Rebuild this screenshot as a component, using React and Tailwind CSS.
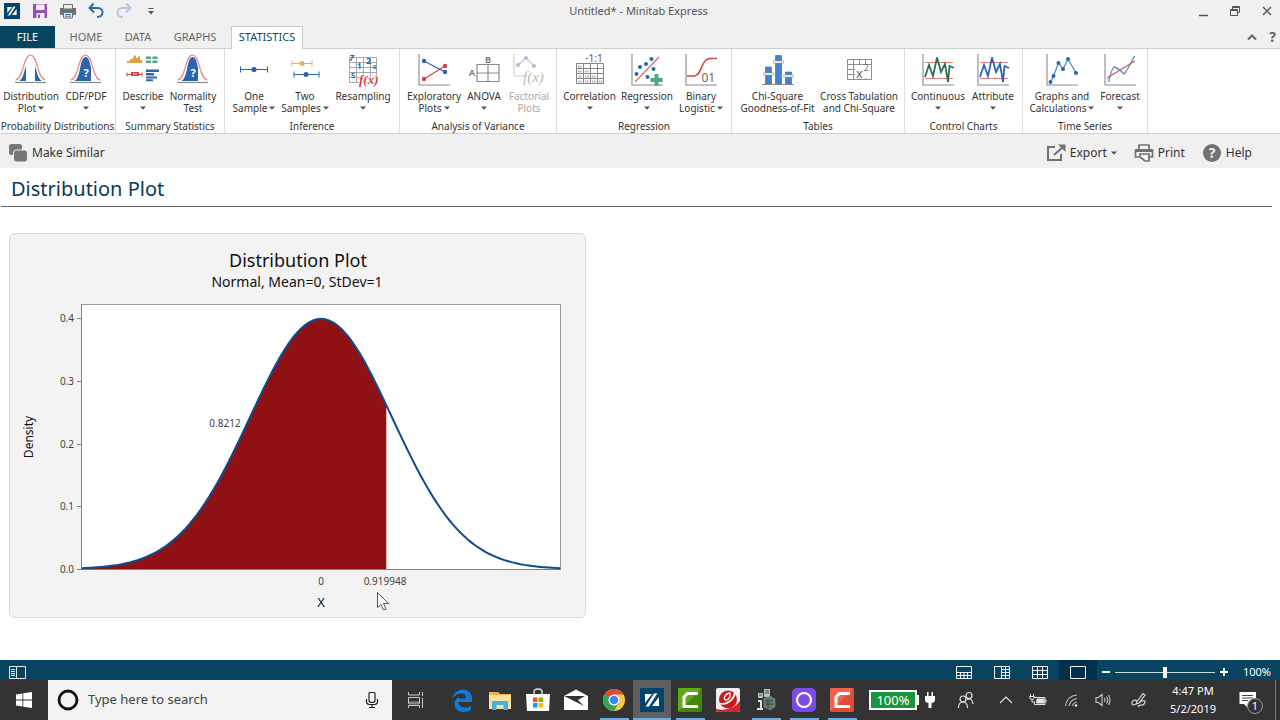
import { useState } from 'react';

const BLUE = '#2a66b0';
const RED = '#d5433d';
const GRAY = '#8a8a8a';

const Caret = ({ className = '' }) => (
  <svg viewBox="0 0 6 4" className={`inline-block h-1 w-1.5 ${className}`} fill="#555">
    <path d="M0 0.5h6L3 3.8z" />
  </svg>
);

const MinitabLogo = ({ className }) => (
  <svg viewBox="0 0 24 24" className={className}>
    <rect width="24" height="24" fill="#00446a" />
    <path d="M5 6h7L5 15zM19 18h-7l7-9z" fill="#fff" />
    <path d="M14 5h4L9 19H5z" fill="#fff" stroke="#00446a" strokeWidth="0.8" />
  </svg>
);

// Ribbon drawings, all on a 32x32 grid
const Axes = () => <path d="M1 0V31H32" fill="none" stroke={GRAY} strokeWidth="1.1" />;

const Bell = () => (
  <>
    <path d="M0.5 26C9 25 8 1 15.5 1S22 25 30.5 26" fill="none" stroke="#e58b88" strokeWidth="1.2" />
    <path d="M0 28.5H31" stroke={GRAY} strokeWidth="1.2" />
  </>
);

const BellFilled = () => (
  <>
    <path d="M4 27C11 25 9.500 3 15.500 3C19 3 20 9 21 14V27Z" fill={BLUE} />
    <Bell />
    <text x="16" y="23" textAnchor="middle" fontSize="11" fontWeight="700" fill="#fff">?</text>
  </>
);

const Control = ({ color }) => (
  <>
    <Axes />
    <path d="M3 8.500H31M3 24.500H31" stroke="#e2827d" strokeWidth="1" />
    <path d="M3 23L7 11L11 22L15 3.500L19 18L23 10L26 28L27.500 12L32 14" fill="none" stroke={color} strokeWidth="1.8" />
  </>
);

const icons = {
  distribution: (
    <>
      <path d="M4 27C8 25 9 18 11 12V27ZM27 27C23 25 22 18 20 12V27Z" fill={BLUE} />
      <Bell />
    </>
  ),
  cdf: <BellFilled />,
  describe: (
    <>
      <path d="M0 9V7h3V5h3V3h1V1.500h2V4h2V2.500h2V6h2v3z" fill="#dfa13c" />
      <path d="M19 2.500h5v2.500h-5zM25.500 2.500h5v2.500h-5zM19 6.500h5V9h-5zM25.500 6.500h5V9h-5z" fill="#52a582" />
      <path d="M0 20.500H15M0 18.500v4M15 18.500v4" stroke={RED} strokeWidth="1" />
      <path d="M4 18h8v4H4z" fill={RED} />
      <path d="M6 20h4" stroke="#fff" strokeWidth="0.800" />
      <path d="M19 15.500h13v2.500H19zM19 19h8v2.500h-8zM19 22.500h11v2H19zM19 25.300h7v2h-7z" fill={BLUE} />
    </>
  ),
  normality: <BellFilled />,
  one: (
    <>
      <path d="M2.500 15.500H29.500M2.500 12.500v6M29.500 12.500v6" stroke={BLUE} strokeWidth="1" />
      <circle cx="16" cy="15.500" r="2.600" fill={BLUE} />
    </>
  ),
  two: (
    <>
      <path d="M3 9.500H23M3 6.500v6M23 6.500v6" stroke="#e9b258" />
      <circle cx="13" cy="9.500" r="2.500" fill="#e9b258" />
      <path d="M5 20.500H30M5 17.500v6M30 17.500v6" stroke={BLUE} />
      <circle cx="17" cy="20.500" r="2.500" fill={BLUE} />
    </>
  ),
  resampling: (
    <>
      <path d="M2.500 3.500h27v25h-27zM2.500 8.500h27M2.500 13.500h27M2.500 18.500h27M2.500 23.500h27M9.500 3v25M16.500 3v25M23.500 3v25" fill="none" stroke="#a5a5a5" />
      <g fill={BLUE} fontWeight="700">
        <text x="2" y="7" fontSize="9" fontStyle="italic">7</text>
        <text x="19" y="10" fontSize="9">2</text>
        <text x="10" y="15" fontSize="8">1</text>
        <text x="4" y="24" fontSize="7">5</text>
        <text x="26" y="15" fontSize="6">0</text>
      </g>
      <text x="12" y="30" fontSize="13" fontStyle="italic" fontWeight="700" fill={RED} stroke="#fff" strokeWidth="1.500" paintOrder="stroke" fontFamily="Liberation Serif, serif">f(x)</text>
    </>
  ),
  exploratory: (
    <>
      <Axes />
      <path d="M6 25L27 12" stroke={RED} strokeWidth="1.200" />
      <path d="M6 7L27 18" stroke={BLUE} strokeWidth="1.200" />
      <g fill={BLUE}><circle cx="6" cy="7" r="2.200" /><circle cx="27" cy="18" r="2.200" /></g>
      <g fill={RED}><circle cx="6" cy="25" r="2.200" /><circle cx="27" cy="12" r="2.200" /></g>
    </>
  ),
  anova: (
    <>
      <path d="M9 10.500h22v17H9zM9 19h22M20 10.500v17" fill="none" stroke={GRAY} strokeWidth="1.200" />
      <g fill="#6b6b6b" fontSize="9" fontWeight="600">
        <text x="1" y="22">A</text>
        <text x="17" y="9">B</text>
      </g>
    </>
  ),
  factorial: (
    <>
      <path d="M1 0V22H12" fill="none" stroke="#c9c9c9" />
      <path d="M5 11L13 4L21 12" fill="none" stroke="#b4c6de" strokeWidth="1.200" />
      <g fill="#aec0da"><circle cx="5" cy="11" r="2" /><circle cx="13" cy="4" r="2" /><circle cx="21" cy="12" r="2" /></g>
      <text x="10" y="28" fontSize="15" fontStyle="italic" fill="#b8b8b8" fontFamily="Liberation Serif, serif">f(x)</text>
    </>
  ),
  correlation: (
    <>
      <path d="M2.500 9.500h27v20h-27zM2.500 14.500h27M2.500 19.500h27M2.500 24.500h27M9.500 9.500v20M16.500 9.500v20M23.500 9.500v20" fill="none" stroke="#858585" />
      <path d="M4 12.500h4M4 17.500h4M11 17.500h4M4 22.500h4M11 22.500h4M18 22.500h4M4 27.500h4M11 27.500h4M18 27.500h4M25 27.500h4" stroke="#b3b3b3" strokeWidth="2" strokeDasharray="1.500 0.500" />
      <text x="20" y="7.500" textAnchor="middle" fontSize="10" fontWeight="500" fill="#777">-1:1</text>
    </>
  ),
  regression: (
    <>
      <Axes />
      <path d="M4 28L28 3" stroke="#dd6e69" strokeWidth="1.300" />
      <g fill={BLUE}>
        <circle cx="5.500" cy="20" r="2" /><circle cx="9" cy="13" r="2" /><circle cx="15" cy="10" r="2" />
        <circle cx="20.500" cy="5" r="2" /><circle cx="22.500" cy="15" r="2" /><circle cx="16.500" cy="23" r="2" />
      </g>
      <path d="M23.500 20h4v4h4v4h-4v4h-4v-4h-4v-4h4z" fill="#55a583" />
    </>
  ),
  logistic: (
    <>
      <Axes />
      <path d="M2 22H9C17 22 16 4.500 25 4.500H32" fill="none" stroke={RED} strokeWidth="1.500" />
      <text x="16.500" y="28" fontSize="12" fill="#666">01</text>
    </>
  ),
  chisquare: (
    <>
      <path d="M3.500 13h6v17h-6zM13.500 1.500h6V30h-6zM23.500 18h6v12h-6z" fill="#4583cb" stroke={BLUE} strokeWidth="0.600" />
      <path d="M0 30.500H32" stroke={GRAY} />
      <path d="M1.500 20h10M11.500 8h10M21.500 22h10" stroke="#8a8f96" strokeWidth="3" />
      <path d="M2 20h9M12 8h9M22 22h9" stroke="#fff" strokeWidth="1.500" />
    </>
  ),
  crosstab: (
    <>
      <path d="M4.500 5.500h24v20h-24zM4.500 10.500h24M4.500 15.500h24M4.500 20.500h24M10.500 5.500v20M16.500 5.500v20M22.500 5.500v20" fill="none" stroke="#8e8e8e" />
      <path d="M12 11h16v13H12z" fill="#fff" />
      <text x="13" y="24" fontSize="13" fill="#666">x</text>
      <text x="21" y="17" fontSize="8" fill="#666">2</text>
      <path d="M28.500 5v21" stroke="#8e8e8e" />
    </>
  ),
  continuous: <Control color="#2b7052" />,
  attribute: <Control color="#2c66b4" />,
  graphs: (
    <>
      <Axes />
      <path d="M4.500 28L7.500 22L12.500 9L17 15L22 5L30 19" fill="none" stroke="#4a83c4" strokeWidth="1.200" />
      <g fill={BLUE}>
        <circle cx="4.500" cy="28" r="2" /><circle cx="7.500" cy="22" r="2" /><circle cx="12.500" cy="9" r="2" />
        <circle cx="17" cy="15" r="2" /><circle cx="22" cy="5" r="2" /><circle cx="30" cy="19" r="2" />
      </g>
    </>
  ),
  forecast: (
    <>
      <Axes />
      <path d="M4.500 28Q8 14 10 13Q13 13 20 20Q23 17 30.500 2" fill="none" stroke="#5a89c4" strokeWidth="1.300" />
      <path d="M3 24L31 7" stroke="#d75c57" strokeWidth="1.400" />
    </>
  ),
};

// caret: 'inline' sits after the second line, 'below' takes that line
const groups = [
  { name: 'Probability Distributions', width: 'w-[116px]', items: [
    { icon: 'distribution', lines: ['Distribution', 'Plot'], caret: 'inline', width: 'w-[54px]' },
    { icon: 'cdf', lines: ['CDF/PDF'], caret: 'below', width: 'w-[56px]' },
  ] },
  { name: 'Summary Statistics', width: 'w-[109px]', items: [
    { icon: 'describe', lines: ['Describe'], caret: 'below', width: 'w-[46px]' },
    { icon: 'normality', lines: ['Normality', 'Test'], width: 'w-[54px]' },
  ] },
  { name: 'Inference', width: 'w-[175px]', items: [
    { icon: 'one', lines: ['One', 'Sample'], caret: 'inline', width: 'w-[50px]' },
    { icon: 'two', lines: ['Two', 'Samples'], caret: 'inline', width: 'w-[52px]' },
    { icon: 'resampling', lines: ['Resampling'], caret: 'below', width: 'w-[64px]' },
  ] },
  { name: 'Analysis of Variance', width: 'w-[157px]', items: [
    { icon: 'exploratory', lines: ['Exploratory', 'Plots'], caret: 'inline', width: 'w-[60px]' },
    { icon: 'anova', lines: ['ANOVA'], caret: 'below', width: 'w-[40px]' },
    { icon: 'factorial', lines: ['Factorial', 'Plots'], disabled: true, width: 'w-[50px]' },
  ] },
  { name: 'Regression', width: 'w-[175px]', items: [
    { icon: 'correlation', lines: ['Correlation'], caret: 'below', width: 'w-[57px]' },
    { icon: 'regression', lines: ['Regression'], caret: 'below', width: 'w-[58px]' },
    { icon: 'logistic', lines: ['Binary', 'Logistic'], caret: 'inline', width: 'w-[50px]' },
  ] },
  { name: 'Tables', width: 'w-[173px]', items: [
    { icon: 'chisquare', lines: ['Chi-Square', 'Goodness-of-Fit'], width: 'w-[83px]' },
    { icon: 'crosstab', lines: ['Cross Tabulation', 'and Chi-Square'], width: 'w-[80px]' },
  ] },
  { name: 'Control Charts', width: 'w-[118px]', items: [
    { icon: 'continuous', lines: ['Continuous'], caret: 'below', width: 'w-[58px]' },
    { icon: 'attribute', lines: ['Attribute'], caret: 'below', width: 'w-[52px]' },
  ] },
  { name: 'Time Series', width: 'w-[125px]', items: [
    { icon: 'graphs', lines: ['Graphs and', 'Calculations'], caret: 'inline', width: 'w-[70px]' },
    { icon: 'forecast', lines: ['Forecast'], caret: 'below', width: 'w-[46px]' },
  ] },
];

const RibbonButton = ({ item }) => (
  <button
    disabled={item.disabled}
    className={`flex shrink-0 flex-col items-center whitespace-nowrap text-[10px] leading-3 ${item.width} ${item.disabled ? 'text-[#a9a9a9]' : 'text-[#333]'}`}
  >
    <svg viewBox="0 0 32 32" className="mb-1 h-8 w-8 shrink-0 overflow-visible">{icons[item.icon]}</svg>
    <span>{item.lines[0]}</span>
    <span className="flex h-3 items-center gap-0.5">
      {item.lines[1]}
      {item.caret && <Caret />}
    </span>
  </button>
);

const TitleBar = () => (
  <header className="flex h-[22px] shrink-0 items-center">
    <div className="flex flex-1 items-center gap-3 pl-1">
      <MinitabLogo className="h-4 w-4" />
      <button aria-label="Save">
        <svg viewBox="0 0 16 16" className="h-4 w-4">
          <path d="M1 1h14v14H1z" fill="#9450b5" />
          <path d="M4 1.500h8.500v5.500H4zM4.500 10h8v5h-8z" fill="#f4eef7" />
          <path d="M6 11.500h2V15H6z" fill="#9450b5" />
        </svg>
      </button>
      <button aria-label="Print">
        <svg viewBox="0 0 16 16" className="h-4 w-4">
          <path d="M0 5h16v7H0z" fill="#707070" />
          <path d="M3.500 1.500h9V6h-9zM3.500 9.500h9V15h-9z" fill="#eee" stroke="#707070" />
          <path d="M5 11.500h6M5 13.200h6" stroke="#3d7ab8" />
        </svg>
      </button>
      <button aria-label="Undo">
        <svg viewBox="0 0 16 16" className="h-4 w-4" fill="none" stroke="#2868b0" strokeWidth="1.900">
          <path d="M5.500 0.500L1.500 5l4.500 4.500M2 5h8c6 0 6.500 9-1 9" />
        </svg>
      </button>
      <button aria-label="Redo" disabled>
        <svg viewBox="0 0 16 16" className="h-4 w-4" fill="none" stroke="#b0c6de" strokeWidth="1.900">
          <path d="M10.500 0.500l4 4.500L10 9.500M14 5H6c-6 0-6.500 9 1 9" />
        </svg>
      </button>
      <button aria-label="Customize toolbar" className="ml-1">
        <svg viewBox="0 0 6 8" className="h-2 w-1.5" fill="#555"><path d="M0.500 1h5v1h-5zM0 4h6L3 7.500z" /></svg>
      </button>
    </div>
    <h1 className="text-[11px] text-[#555]">Untitled* - Minitab Express</h1>
    <div className="flex flex-1 justify-end gap-5 pr-[7px] text-[#555]">
      <button aria-label="Minimize">
        <svg viewBox="0 0 12 12" className="h-3 w-3" stroke="currentColor" strokeWidth="1.500"><path d="M2 10.500h9" /></svg>
      </button>
      <button aria-label="Restore">
        <svg viewBox="0 0 12 12" className="h-3 w-3" fill="none" stroke="currentColor"><path d="M1.500 4.500h7v6h-7zM1.500 5.500h7M3.500 4V1.500h7v6H9M3.500 2.500h7" /></svg>
      </button>
      <button aria-label="Close">
        <svg viewBox="0 0 12 12" className="h-3 w-3" stroke="currentColor" strokeWidth="1.400"><path d="M2 2l8 8M10 2l-8 8" /></svg>
      </button>
    </div>
  </header>
);

const TabBar = () => (
  <nav className="flex h-[26px] shrink-0 items-end text-[11px] text-[#666]">
    <button className="h-[22px] w-[55px] bg-[#064560] text-white">FILE</button>
    <button className="h-[22px] w-[62px]">HOME</button>
    <button className="h-[22px] w-[42px]">DATA</button>
    <button className="h-[22px] w-[72px]">GRAPHS</button>
    <button className="z-10 -mb-px h-[23px] w-[72px] border border-b-0 border-[#ccc] bg-white pb-px text-[#0b4a66]">STATISTICS</button>
    <div className="ml-auto flex h-[22px] items-center gap-3 pr-1">
      <button aria-label="Collapse ribbon">
        <svg viewBox="0 0 10 8" className="h-2 w-2.5" fill="none" stroke="#666" strokeWidth="2"><path d="M1 6.500L5 2.500L9 6.500" /></svg>
      </button>
      <button className="text-sm font-bold">?</button>
    </div>
  </nav>
);

const Ribbon = () => (
  <section className="flex h-[86px] shrink-0 border-y border-[#cfcfcf] bg-white">
    {groups.map(g => (
      <div key={g.name} className={`flex shrink-0 flex-col border-r border-[#ddd] pt-[5px] ${g.width}`}>
        <div className="flex pl-1">
          {g.items.map(item => <RibbonButton key={item.icon} item={item} />)}
        </div>
        <p className="mt-1 self-center text-[10px] leading-4 whitespace-nowrap text-[#333]">{g.name}</p>
      </div>
    ))}
  </section>
);

const Toolbar = () => (
  <section className="flex h-[34px] shrink-0 items-center pt-[3px] pr-7 pl-2 text-xs text-[#333]">
    <button className="flex items-center gap-1">
      <svg viewBox="0 0 20 20" className="h-5 w-5">
        <rect x="1" y="1" width="13" height="11" rx="2.500" fill="#777" />
        <rect x="5.500" y="7" width="14" height="12" rx="3" fill="#777" stroke="#f0f0f0" />
      </svg>
      Make Similar
    </button>
    <div className="ml-auto flex items-center gap-[17px]">
      <button className="flex items-center gap-1">
        <svg viewBox="0 0 20 20" className="h-5 w-5" fill="none" stroke="#717171" strokeWidth="2">
          <path d="M9 4H2v13h13v-6M8 12L18 3" />
          <path d="M12 1.500h7.500v7.500z" fill="#717171" stroke="none" />
        </svg>
        Export
        <Caret />
      </button>
      <button className="flex items-center gap-1">
        <svg viewBox="0 0 20 20" className="h-5 w-5" fill="none" stroke="#717171" strokeWidth="1.700">
          <path d="M5 7V2h10v5M5 14H1.500V7h17v7H15M6 11h9v7h-4l-5-4z" />
          <path d="M2 7.500h16" strokeWidth="3" />
        </svg>
        Print
      </button>
      <button className="flex items-center gap-1">
        <svg viewBox="0 0 20 20" className="h-5 w-5">
          <circle cx="10" cy="10" r="9" fill="#717171" />
          <text x="10" y="15" textAnchor="middle" fontSize="14" fontWeight="700" fill="#f0f0f0">?</text>
        </svg>
        Help
      </button>
    </div>
  </section>
);

// Plot area and scale of the density graph
const ORIGIN_X = 312;
const BASE_Y = 336;
const UNIT_X = 71;
const UNIT_Y = 627;
const RANGE = 3.37;
const CUTOFF = 0.919948;

const curve = (from, to) => {
  const points = [];
  for (let i = 0; i <= 120; i++) {
    const z = from + ((to - from) * i) / 120;
    const density = Math.exp((-z * z) / 2) / Math.sqrt(2 * Math.PI);
    points.push(`${ORIGIN_X + z * UNIT_X},${BASE_Y - density * UNIT_Y}`);
  }
  return points.join(' ');
};

const DensityPlot = () => {
  const cutX = ORIGIN_X + CUTOFF * UNIT_X;
  return (
    <svg viewBox="1 1 575 383" className="block h-[383px] w-[575px]" role="img" aria-label="Distribution plot">
      <g textAnchor="middle" fill="#111">
        <text x="289" y="34" fontSize="18">Distribution Plot</text>
        <text x="288" y="54" fontSize="14">Normal, Mean=0, StDev=1</text>
        <text x="312" y="374" fontSize="13">X</text>
        <text x="24" y="204" fontSize="12" transform="rotate(-90 24 204)">Density</text>
      </g>
      <rect x="72.500" y="71.500" width="479" height="265" fill="#fff" stroke="#999" />
      <polygon points={`73,${BASE_Y} ${curve(-RANGE, CUTOFF)} ${cutX},${BASE_Y}`} fill="#8f1113" />
      <path d="M72.500 71V336.500H552" fill="none" stroke="#808080" />
      {[0, 1, 2, 3, 4].map(n => {
        const y = Math.round(BASE_Y - n * 0.1 * UNIT_Y);
        return (
          <g key={n}>
            <path d={`M68 ${y + 0.5}H72`} stroke="#808080" />
            <text x="65" y={y + 4} textAnchor="end" fontSize="10" fill="#444">{(n / 10).toFixed(1)}</text>
          </g>
        );
      })}
      <polyline points={curve(-RANGE, RANGE)} fill="none" stroke="#0b4c93" strokeWidth="2" />
      <g fontSize="10" textAnchor="middle" fill="#444">
        <text x="216" y="194">0.8212</text>
        <text x="312" y="352">0</text>
        <text x="376" y="352">{CUTOFF}</text>
      </g>
    </svg>
  );
};

const views = [
  { name: 'Split view', path: 'M0.500 1.500h15v12h-15zM0.500 7.500h15M0.500 10.500h15M4.500 7.500v6M8 7.500v6M11.500 7.500v6' },
  { name: 'Side view', path: 'M0.500 1.500h15v12h-15zM7.500 1.500v12M11.500 1.500v12M7.500 4.500h8M7.500 7.500h8M7.500 10.500h8' },
  { name: 'Grid view', path: 'M0.500 1.500h15v12h-15zM0.500 5.500h15M0.500 9.500h15M5.500 1.500v12M10.500 1.500v12' },
  { name: 'Single view', path: 'M0.500 1.500h15v12h-15z', active: true },
];

const StatusBar = () => {
  const [zoom, setZoom] = useState(100);
  return (
    <section className="flex h-5 shrink-0 items-stretch bg-[#084460] text-[11px] text-white">
      <button aria-label="Toggle navigator" className="flex items-end pl-[9px]">
        <svg viewBox="0 0 17 14" className="h-3.5 w-[17px]" fill="none" stroke="#e2edf2">
          <path d="M0.500 0.500h16v12h-16zM7.500 0.500v12" />
          <path d="M2 3.500h4M2 5.500h4M2 7.500h4M2 9.500h4" strokeWidth="1.200" />
        </svg>
      </button>
      <div className="ml-auto flex">
        {views.map(v => (
          <button key={v.name} aria-label={v.name} className={`flex w-[38px] items-end justify-center ${v.active ? 'bg-[#03304a]' : ''}`}>
            <svg viewBox="0 0 16 15" className="h-[15px] w-4" fill="none" stroke="#eef4f7">
              <path d={v.path} />
            </svg>
          </button>
        ))}
      </div>
      <div className="flex items-center gap-1 pt-1 pr-[9px] pl-1">
        <button aria-label="Zoom out" onClick={() => setZoom(Math.max(0, zoom - 10))}>
          <svg viewBox="0 0 10 10" className="h-2.5 w-2.5" stroke="#fff" strokeWidth="2"><path d="M1 5h8" /></svg>
        </button>
        <input
          type="range"
          aria-label="Zoom"
          min="0"
          max="200"
          value={zoom}
          onChange={e => setZoom(Number(e.target.value))}
          className="h-3 w-[100px] appearance-none bg-transparent [&::-webkit-slider-runnable-track]:h-px [&::-webkit-slider-runnable-track]:bg-[#c9dbe4] [&::-webkit-slider-thumb]:-mt-[5px] [&::-webkit-slider-thumb]:h-[11px] [&::-webkit-slider-thumb]:w-1 [&::-webkit-slider-thumb]:appearance-none [&::-webkit-slider-thumb]:bg-white"
        />
        <button aria-label="Zoom in" onClick={() => setZoom(Math.min(200, zoom + 10))}>
          <svg viewBox="0 0 10 10" className="h-2.5 w-2.5" stroke="#fff" strokeWidth="2"><path d="M1 5h8M5 1v8" /></svg>
        </button>
        <span className="w-[38px] text-right leading-3">{zoom}%</span>
      </div>
    </section>
  );
};

const Camtasia = ({ color, light }) => (
  <>
    <rect width="24" height="24" rx="2" fill={color} />
    <path d="M0 0h24L0 24z" fill={light} opacity="0.500" />
    <path d="M20 5.500H9.500L6 9V18.500H20" fill="none" stroke="#fff" strokeWidth="3" />
  </>
);

const apps = [
  { name: 'Edge', art: (
    <path d="M2 12C3 5 8 1.500 13 1.500C19 1.500 22 6 22 11V14H8.500C8.500 18 12 19.500 15 19.500C17.500 19.500 19.500 19 21 18V22C19 23.300 16.500 24 13.500 24C8 24 4.500 20.500 4.500 16C4.500 12 7 9.500 9.500 8.500C8.800 9.300 8.500 10 8.500 10.500H16C16 7 14 5.500 11.500 5.500C7 5.500 4 8 2 12Z" fill="#1478d4" />
  ) },
  { name: 'File Explorer', art: (
    <>
      <path d="M1 4h9l2 2h11v15H1z" fill="#e6b84e" />
      <path d="M1 7h22v14H1z" fill="#fce29a" />
      <path d="M4 13h16v9h-4.500v-5h-7v5H4z" fill="#41b1e4" />
    </>
  ) },
  { name: 'Store', art: (
    <>
      <path d="M8 7V4c0-4 8-4 8 0v3" fill="none" stroke="#ddd" strokeWidth="1.500" />
      <path d="M0 6h24l-1 17H1z" fill="#fff" />
      <path d="M7 9.500h4.500V14H7z" fill="#f25022" /><path d="M12.500 9.500H17V14h-4.500z" fill="#7fba00" />
      <path d="M7 15h4.500v4.500H7z" fill="#00a4ef" /><path d="M12.500 15H17v4.500h-4.500z" fill="#ffb900" />
    </>
  ) },
  { name: 'Mail', art: (
    <>
      <path d="M12 1.500L24 8v14H0V8z" fill="#fff" />
      <path d="M0 8h21l-7 4 6 6-9-4.500z" fill="#333" />
    </>
  ) },
  { name: 'Chrome', running: true, art: (
    <>
      <circle cx="12" cy="12" r="11" fill="#f6c945" />
      <path d="M12 12L2.500 6.500A11 11 0 0 1 21.500 6.500H12z" fill="#dc4a3d" />
      <path d="M12 12L2.500 6.500A11 11 0 0 0 12 23L17 14.500z" fill="#35a257" />
      <circle cx="12" cy="12" r="5.500" fill="#fff" />
      <circle cx="12" cy="12" r="4.300" fill="#4485ed" />
    </>
  ) },
  { name: 'Minitab Express', running: true, active: true },
  { name: 'Camtasia', running: true, art: <Camtasia color="#43880c" light="#82c91e" /> },
  { name: 'Antivirus', art: (
    <>
      <rect width="24" height="24" rx="2" fill="#eee" />
      <path d="M24 13v9q0 2-2 2H2q-2 0-2-2v-1q16 3 24-8z" fill="#d5282d" />
      <circle cx="12" cy="11.500" r="9" fill="#c9181e" />
      <path d="M4 15.500C10 17 17 13 19 5" fill="none" stroke="#fff" strokeWidth="1.800" />
      <path d="M14 5C8 6 7 12 10 12S15 8 14 5Z" fill="none" stroke="#fff" strokeWidth="1.300" />
    </>
  ) },
  { name: 'Server Manager', running: true, art: (
    <>
      <path d="M10 1h6v8h-6zM4 5h5v5H4z" fill="#b9c1bd" />
      <path d="M11 3h4M11 5h4M5 7h3" stroke="#444" />
      <path d="M10 11l6-3 5 3v8l-5 3-6-3z" fill="#647b6b" stroke="#92a497" strokeDasharray="1 1" />
      <path d="M11 13h8M11 16h8M14 11v10" stroke="#344a3b" />
      <path d="M4 13h3v8M3 21h6" fill="none" stroke="#ddd" strokeWidth="2" />
    </>
  ) },
  { name: 'Recorder', running: true, art: (
    <>
      <rect width="24" height="24" rx="5" fill="#7b4be8" />
      <circle cx="12" cy="12" r="7" fill="none" stroke="#fff" strokeWidth="2.200" />
    </>
  ) },
  { name: 'Camtasia Recorder', running: true, art: <Camtasia color="#e14b3b" light="#ff7a5c" /> },
];

const Taskbar = () => (
  <footer className="flex h-10 shrink-0 items-stretch bg-[#333] text-white">
    <button aria-label="Start" className="flex w-12 items-center justify-center">
      <svg viewBox="0 0 16 16" className="h-4 w-4" fill="#fff">
        <path d="M0 2.500L6.500 1.500V7.500H0zM7.300 1.300L16 0V7.500H7.300zM0 8.400H6.500V14.500L0 13.500zM7.300 8.400H16V16L7.300 14.700z" />
      </svg>
    </button>
    <label className="flex w-[344px] items-center gap-2 bg-[#f2f2f2] pr-[13px] pl-2 text-[#444]">
      <svg viewBox="0 0 24 24" className="h-6 w-6 shrink-0"><circle cx="12" cy="12" r="9" fill="none" stroke="#111" strokeWidth="2.800" /></svg>
      <input type="text" aria-label="Search" placeholder="Type here to search" className="min-w-0 flex-1 bg-transparent text-[13px] outline-none placeholder:text-[#444]" />
      <svg viewBox="0 0 14 18" className="h-[18px] w-3.5" fill="none" stroke="#222" strokeWidth="1.200">
        <path d="M5 1.500h4q1 0 1 1v7q0 2-3 2t-3-2v-7q0-1 1-1zM1.500 8v2.500q0 3 3 3h5q3 0 3-3V8M7 14v2.500M4 16.500h6" />
      </svg>
    </label>
    <button aria-label="Task view" className="mr-1 flex w-[47px] items-center justify-center">
      <svg viewBox="0 0 18 18" className="h-[18px] w-[18px]" fill="none" stroke="#ccc">
        <path d="M1.500 1v3h11V1M1.500 6.500h11v6h-11zM1.500 17v-2.500h11V17M15.500 1v4M15.500 7v10" />
        <path d="M2 12h10" stroke="#888" strokeWidth="3" />
      </svg>
    </button>
    {apps.map(a => (
      <button
        key={a.name}
        aria-label={a.name}
        className={`flex w-[38px] items-center justify-center ${a.active ? 'bg-[#606060]' : ''}`}
      >
        <span className={`flex h-full items-center justify-center border-t-2 border-b-2 border-t-transparent ${a.active ? 'w-full' : 'w-[29px]'} ${a.running ? 'border-b-[#6cacdf]' : 'border-b-transparent'}`}>
          {a.active
            ? <MinitabLogo className="h-6 w-6" />
            : <svg viewBox="0 0 24 24" className="h-6 w-6">{a.art}</svg>}
        </span>
      </button>
    ))}
    <div className="ml-auto flex shrink-0 items-center">
      <span className="h-5 w-12 border-2 border-white bg-[#17963f] text-center text-[13px] leading-4">100%</span>
      <span className="h-2.5 w-0.5 bg-white" />
      <svg viewBox="0 0 10 16" className="ml-1.5 h-4 w-2.5" fill="#fff"><path d="M2 0h1.500v4h3V0H8v4h2v4q0 2.500-3.500 3V16h-3v-5Q0 10.500 0 8V4h2z" /></svg>
      <button aria-label="People" className="ml-[22px]">
        <svg viewBox="0 0 18 18" className="h-[18px] w-[18px]" fill="none" stroke="#e5e5e5" strokeWidth="1.200">
          <circle cx="6" cy="8" r="3" /><path d="M1.500 17q0-6 4.500-6t4.500 6" />
          <circle cx="12" cy="4.500" r="3" /><path d="M10 8.500q5-2.500 6 4.500" />
        </svg>
      </button>
      <button aria-label="Show hidden icons" className="ml-6">
        <svg viewBox="0 0 14 14" className="h-3.5 w-3.5" fill="none" stroke="#e5e5e5" strokeWidth="1.200"><path d="M1 10l6-6 6 6" /></svg>
      </button>
      <button aria-label="Power" className="ml-4">
        <svg viewBox="0 0 18 14" className="h-3.5 w-[18px]" fill="none" stroke="#e5e5e5">
          <path d="M6 4.500h10v7H5.500V9M17 6.500v3" /><path d="M8 6h7v4H7.500z" fill="#e5e5e5" />
          <path d="M1.500 1v2M4.500 1v2M0.500 3.500h5q0 3-2.500 3T0.500 3.500M3 6.500V9h3" />
        </svg>
      </button>
      <button aria-label="Wi-Fi" className="ml-4">
        <svg viewBox="0 0 16 16" className="h-4 w-4" fill="none" stroke="#bbb" strokeWidth="1.200">
          <path d="M2.500 14Q4 4 14 3M6 14Q7 8 14 6.500M9.500 14Q10 11 14 10" />
          <circle cx="13" cy="13.500" r="1.200" fill="#eee" stroke="none" />
        </svg>
      </button>
      <button aria-label="Volume" className="ml-4">
        <svg viewBox="0 0 16 16" className="h-4 w-4" fill="none" stroke="#ccc" strokeWidth="1.100">
          <path d="M1 5.500h2.500L7 2.500v11L3.500 10.500H1zM9.500 6q1 2 0 4M11.500 4.500q2.500 3.500 0 7M13.500 3q3 5 0 10" />
        </svg>
      </button>
      <button aria-label="Windows Ink" className="ml-5">
        <svg viewBox="0 0 16 16" className="h-4 w-4" fill="none" stroke="#ddd" strokeWidth="1.100">
          <path d="M6 9.500L12 1.500l2 1.500-6 8-3 1zM5 12c-7 4-4-7 1-3M8 11c4-4 8-2 5 1s-4-1-6 3" />
        </svg>
      </button>
      <div className="ml-2 w-[76px] text-center text-[11px] leading-[18px]">
        <p>4:47 PM</p>
        <p>5/2/2019</p>
      </div>
      <button aria-label="Notifications, 1 new" className="relative ml-2 h-7 w-6">
        <svg viewBox="0 0 18 18" className="h-[18px] w-[18px]">
          <path d="M0.500 1h16.500v12h-8v4l-4-4H0.500z" fill="#fff" />
          <path d="M3 4.500h11M3 7h11M3 9.500h6" stroke="#444" />
        </svg>
        <span className="absolute right-0 bottom-0 h-4 w-4 rounded-full border border-[#999] bg-[#333] text-[11px] leading-[14px]">1</span>
      </button>
      <span className="ml-3 h-full border-l border-[#777] pl-1" />
    </div>
  </footer>
);

export default function App() {
  return (
    <div className="flex min-h-screen flex-col bg-[#f0f0f0] font-['Noto_Sans',sans-serif]">
      <TitleBar />
      <TabBar />
      <Ribbon />
      <Toolbar />
      <main className="flex-1 bg-white">
        <h2 className="mr-2 ml-px border-b border-[#666] pt-1.5 pb-0.5 pl-2.5 text-xl leading-[30px] text-[#0b3a58]">Distribution Plot</h2>
        <div className="relative mt-[26px] ml-[9px] w-fit rounded-md border border-[#d9d9d9] bg-[#f3f3f3]">
          <DensityPlot />
          <svg viewBox="0 0 12 19" className="absolute top-[358px] left-[367px] h-[19px] w-3" fill="#fff" stroke="#555">
            <path d="M0.500 0.500V15.500L4 12.500L6.500 18L9 17L6.500 11.500H11.500Z" />
          </svg>
        </div>
      </main>
      <StatusBar />
      <Taskbar />
    </div>
  );
}
